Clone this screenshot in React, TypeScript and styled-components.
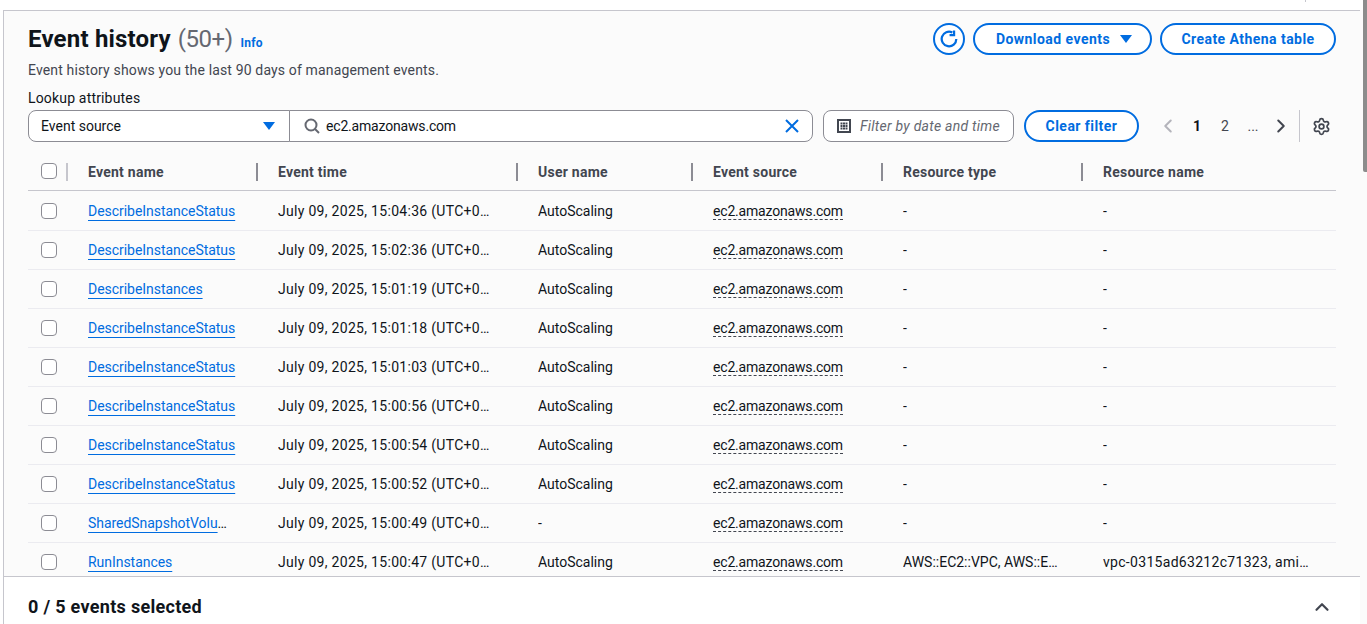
import React from 'react';
import styled, { createGlobalStyle } from 'styled-components';
import { ChevronLeft, ChevronRight, ChevronUp, Settings } from 'lucide-react';

const FONT = '"Roboto", "Liberation Sans", sans-serif';

const GlobalStyle = createGlobalStyle`
  html, body {
    margin: 0;
    padding: 0;
    height: 100%;
    overflow: hidden;
    background: #fff;
    font-family: ${FONT};
    font-size: 14px;
    color: #0f141a;
  }
  * { box-sizing: border-box; }
`;

const COLUMNS = '60px 190px 260px 175px 190px 200px 1fr';

const Page = styled.div`
  width: 1367px;
  height: 624px;
  display: flex;
  flex-direction: column;
  padding-top: 10px;
  position: relative;
  overflow: hidden;
`;

const Scrollbar = styled.div`
  position: absolute;
  top: 0;
  right: 0;
  width: 4px;
  height: 172px;
  background: #8c8c8c;
  border-radius: 0 0 0 2px;
`;

const TopTick = styled.div`
  position: absolute;
  top: 0;
  left: 1305px;
  width: 1px;
  height: 2px;
  background: #c6c6cd;
`;

const Main = styled.main`
  flex: 1;
  min-height: 0;
  overflow: hidden;
  margin-left: 3px;
  margin-right: 7px;
  padding: 12px 24px 0 24px;
  background: #fbfbfb;
  box-shadow: 7px 0 0 #fbfbfb;
  border-top: 1px solid #c6c6cd;
  border-left: 1px solid #c6c6cd;
`;

const HeaderRow = styled.div`
  display: flex;
  justify-content: space-between;
  align-items: flex-start;
  height: 32px;
`;

const TitleGroup = styled.div`
  display: flex;
  align-items: baseline;
`;

const Title = styled.h1`
  margin: 0;
  font-size: 24px;
  line-height: 32px;
  font-weight: 700;
  letter-spacing: 0.2px;
  color: #0f141a;
`;

const Count = styled.span`
  margin-left: 7px;
  font-size: 24px;
  font-weight: 400;
  letter-spacing: -0.5px;
  color: #656871;
`;

const InfoLink = styled.a`
  margin-left: 8px;
  font-size: 12px;
  font-weight: 700;
  letter-spacing: 0.2px;
  color: #006ce0;
`;

const Actions = styled.div`
  display: flex;
  gap: 8px;
`;

const Button = styled.button<{ $width?: number }>`
  height: 32px;
  width: ${(p) => (p.$width ? `${p.$width}px` : 'auto')};
  padding: 0;
  border: 2px solid #006ce0;
  border-radius: 16px;
  background: #fff;
  color: #006ce0;
  font: 700 14px ${FONT};
  letter-spacing: 0.45px;
  display: inline-flex;
  align-items: center;
  justify-content: center;
  gap: 10px;
`;

const DownloadButton = styled(Button)`
  padding-left: 3px;
`;

const Description = styled.p`
  margin: 5px 0 0;
  height: 20px;
  line-height: 20px;
  color: #424650;
  font-size: 14px;
  letter-spacing: 0.15px;
`;

const FilterLabel = styled.div`
  margin-top: 8px;
  height: 20px;
  line-height: 20px;
  font-size: 14px;
  letter-spacing: 0.17px;
  color: #0f141a;
`;

const FilterRow = styled.div`
  display: flex;
  align-items: center;
  height: 32px;
  margin-top: 2px;
`;

const Select = styled.div`
  width: 262px;
  height: 32px;
  padding: 0 14px 0 12px;
  display: flex;
  align-items: center;
  justify-content: space-between;
  background: #fff;
  border: 1px solid #8c8c94;
  border-radius: 8px 0 0 8px;
`;

const SearchBox = styled.div`
  width: 524px;
  height: 32px;
  margin-left: -1px;
  padding: 0 12px 0 14px;
  display: flex;
  align-items: center;
  gap: 6px;
  background: #fff;
  border: 1px solid #8c8c94;
  border-radius: 0 8px 8px 0;
`;

const SearchValue = styled.span`
  flex: 1;
  letter-spacing: -0.18px;
  color: #0f141a;
`;

const DateField = styled.div`
  width: 191px;
  height: 32px;
  margin-left: 10px;
  padding: 0 12px 0 13px;
  display: flex;
  align-items: center;
  gap: 9px;
  background: #fff;
  border: 1px solid #8c8c94;
  border-radius: 8px;
  color: #656871;
  font-style: italic;
  letter-spacing: 0.25px;
  white-space: nowrap;
`;

const ClearButton = styled(Button)`
  margin-left: 10px;
`;

const Pager = styled.div`
  margin-left: 18px;
  display: flex;
  align-items: center;
  height: 32px;
`;

const PageNumber = styled.span<{ $active?: boolean }>`
  width: 28px;
  text-align: center;
  color: ${(p) => (p.$active ? '#0f141a' : '#424650')};
  font-weight: ${(p) => (p.$active ? 700 : 400)};
`;

const PrevIcon = styled(ChevronLeft)`
  margin-right: 4px;
`;

const NextIcon = styled(ChevronRight)`
  margin-left: 3px;
`;

const PagerDivider = styled.div`
  width: 1px;
  height: 32px;
  margin: 0 12px 0 7px;
  background: #c6c6cd;
`;

const TableHead = styled.div`
  display: grid;
  grid-template-columns: ${COLUMNS};
  height: 49px;
  margin-bottom: 1px;
  padding-top: 21px;
  border-bottom: 1px solid #c6c6cd;
`;

const HeadCell = styled.div<{ $divider?: boolean }>`
  height: 18px;
  line-height: 18px;
  font-weight: 700;
  font-size: 14px;
  letter-spacing: 0.25px;
  color: #424650;
  margin-right: 20px;
  border-right: ${(p) => (p.$divider ? '2px solid #8c8c94' : 'none')};
`;

const CheckHead = styled.div`
  display: flex;
  align-items: flex-start;
  height: 18px;
  padding-left: 13px;
  gap: 9px;
`;

const CheckDivider = styled.span`
  width: 2px;
  height: 18px;
  background: #c6c6cd;
`;

const Check = styled.span`
  display: block;
  width: 16px;
  height: 16px;
  background: #fff;
  border: 1px solid #8c8c94;
  border-radius: 4px;
`;

const Row = styled.div`
  display: grid;
  grid-template-columns: ${COLUMNS};
  align-items: center;
  height: 39px;
  border-bottom: 1px solid #ebebf0;
`;

const CheckCell = styled.div`
  padding-left: 13px;
`;

const Cell = styled.div<{ $gap?: number; $track?: number }>`
  padding-right: ${(p) => p.$gap ?? 40}px;
  letter-spacing: ${(p) => p.$track ?? 0}px;
  white-space: nowrap;
  overflow: hidden;
  text-overflow: ellipsis;
  line-height: 22px;
  color: #0f141a;
`;

const EventLink = styled.a`
  color: #006ce0;
  text-decoration: underline 1px #006ce0;
  text-underline-offset: 4px;
`;

const Source = styled.span`
  border-bottom: 1px dashed #424650;
`;

const Footer = styled.footer`
  height: 48px;
  margin-left: 3px;
  margin-right: 7px;
  padding: 19px 27px 0 24px;
  display: flex;
  align-items: flex-start;
  justify-content: space-between;
  background: #fff;
  box-shadow: 7px 0 0 #fbfbfb;
  border-top: 1px solid #c6c6cd;
  border-left: 1px solid #c6c6cd;
`;

const FooterTitle = styled.h2`
  margin: 0;
  font-size: 18px;
  line-height: 22px;
  font-weight: 700;
  letter-spacing: 0.3px;
  color: #0f141a;
`;

const Caret = () => (
  <svg width="12" height="8" viewBox="0 0 12 8">
    <path d="M0 0h12L6 8z" fill="#006ce0" />
  </svg>
);

const RefreshIcon = () => (
  <svg width="18" height="18" viewBox="0 0 16 16" fill="none" stroke="#006ce0" strokeWidth="2">
    <path d="M14.500 8A6.500 6.500 0 1 1 11 2.200" />
    <path d="M12.500 .5V4.500H8.500" />
  </svg>
);

const SearchIcon = () => (
  <svg width="16" height="16" viewBox="0 0 16 16" fill="none" stroke="#656871" strokeWidth="2">
    <circle cx="7" cy="7" r="5.500" />
    <path d="M11 11l4 4" />
  </svg>
);

const ClearIcon = () => (
  <svg width="16" height="16" viewBox="0 0 16 16" fill="none" stroke="#006ce0" strokeWidth="2">
    <path d="M2 2l12 12M14 2L2 14" />
  </svg>
);

const CalendarIcon = () => (
  <svg width="14" height="14" viewBox="0 0 14 14" fill="#424650">
    <path d="M0 0h14v14H0zM2 2v10h10V2z" fillRule="evenodd" />
    <path d="M3.500 3.500h2v2h-2zM6 3.500h2v2H6zM8.500 3.500h2v2h-2zM3.500 6h2v2h-2zM6 6h2v2H6zM8.500 6h2v2h-2zM3.500 8.500h2v2h-2zM6 8.500h2v2H6zM8.500 8.500h2v2h-2z" />
  </svg>
);

interface EventRow {
  name: string;
  time: string;
  user: string;
  type: string;
  resource: string;
}

const row = (name: string, time: string, user = 'AutoScaling', type = '-', resource = '-'): EventRow => ({
  name,
  time,
  user,
  type,
  resource,
});

const events: EventRow[] = [
  row('DescribeInstanceStatus', '15:04:36'),
  row('DescribeInstanceStatus', '15:02:36'),
  row('DescribeInstances', '15:01:19'),
  row('DescribeInstanceStatus', '15:01:18'),
  row('DescribeInstanceStatus', '15:01:03'),
  row('DescribeInstanceStatus', '15:00:56'),
  row('DescribeInstanceStatus', '15:00:54'),
  row('DescribeInstanceStatus', '15:00:52'),
  row('SharedSnapshotVolumeCreated', '15:00:49', '-'),
  row('RunInstances', '15:00:47', 'AutoScaling', 'AWS::EC2::VPC, AWS::EC2::Instance', 'vpc-0315ad63212c71323, ami-0abc'),
];

const App: React.FC = () => (
  <Page>
    <GlobalStyle />
    <TopTick />
    <Scrollbar />
    <Main>
      <HeaderRow>
        <TitleGroup>
          <Title>Event history</Title>
          <Count>(50+)</Count>
          <InfoLink>Info</InfoLink>
        </TitleGroup>
        <Actions>
          <Button $width={32} aria-label="Refresh">
            <RefreshIcon />
          </Button>
          <DownloadButton $width={179}>
            Download events
            <Caret />
          </DownloadButton>
          <Button $width={176}>Create Athena table</Button>
        </Actions>
      </HeaderRow>
      <Description>Event history shows you the last 90 days of management events.</Description>
      <FilterLabel>Lookup attributes</FilterLabel>
      <FilterRow>
        <Select>
          Event source
          <Caret />
        </Select>
        <SearchBox>
          <SearchIcon />
          <SearchValue>ec2.amazonaws.com</SearchValue>
          <ClearIcon />
        </SearchBox>
        <DateField>
          <CalendarIcon />
          Filter by date and time
        </DateField>
        <ClearButton $width={115}>Clear filter</ClearButton>
        <Pager>
          <PrevIcon size={22} color="#b4b4bb" strokeWidth={2.2} />
          <PageNumber $active>1</PageNumber>
          <PageNumber>2</PageNumber>
          <PageNumber>...</PageNumber>
          <NextIcon size={22} color="#424650" strokeWidth={2.2} />
          <PagerDivider />
          <Settings size={19} color="#424650" strokeWidth={2.2} />
        </Pager>
      </FilterRow>
      <TableHead>
        <CheckHead>
          <Check />
          <CheckDivider />
        </CheckHead>
        <HeadCell $divider>Event name</HeadCell>
        <HeadCell $divider>Event time</HeadCell>
        <HeadCell $divider>User name</HeadCell>
        <HeadCell $divider>Event source</HeadCell>
        <HeadCell $divider>Resource type</HeadCell>
        <HeadCell>Resource name</HeadCell>
      </TableHead>
      {events.map((e) => (
        <Row key={e.time}>
          <CheckCell>
            <Check />
          </CheckCell>
          <Cell $gap={42} $track={-0.04}>
            <EventLink>{e.name}</EventLink>
          </Cell>
          <Cell $gap={45} $track={0.3}>
            July 09, 2025, {e.time} (UTC+05:30)
          </Cell>
          <Cell>{e.user}</Cell>
          <Cell $track={-0.18}>
            <Source>ec2.amazonaws.com</Source>
          </Cell>
          <Cell>{e.type}</Cell>
          <Cell $gap={24} $track={0.3}>
            {e.resource}
          </Cell>
        </Row>
      ))}
    </Main>
    <Footer>
      <FooterTitle>0 / 5 events selected</FooterTitle>
      <ChevronUp size={22} color="#424650" strokeWidth={2.4} />
    </Footer>
  </Page>
);

export default App;
